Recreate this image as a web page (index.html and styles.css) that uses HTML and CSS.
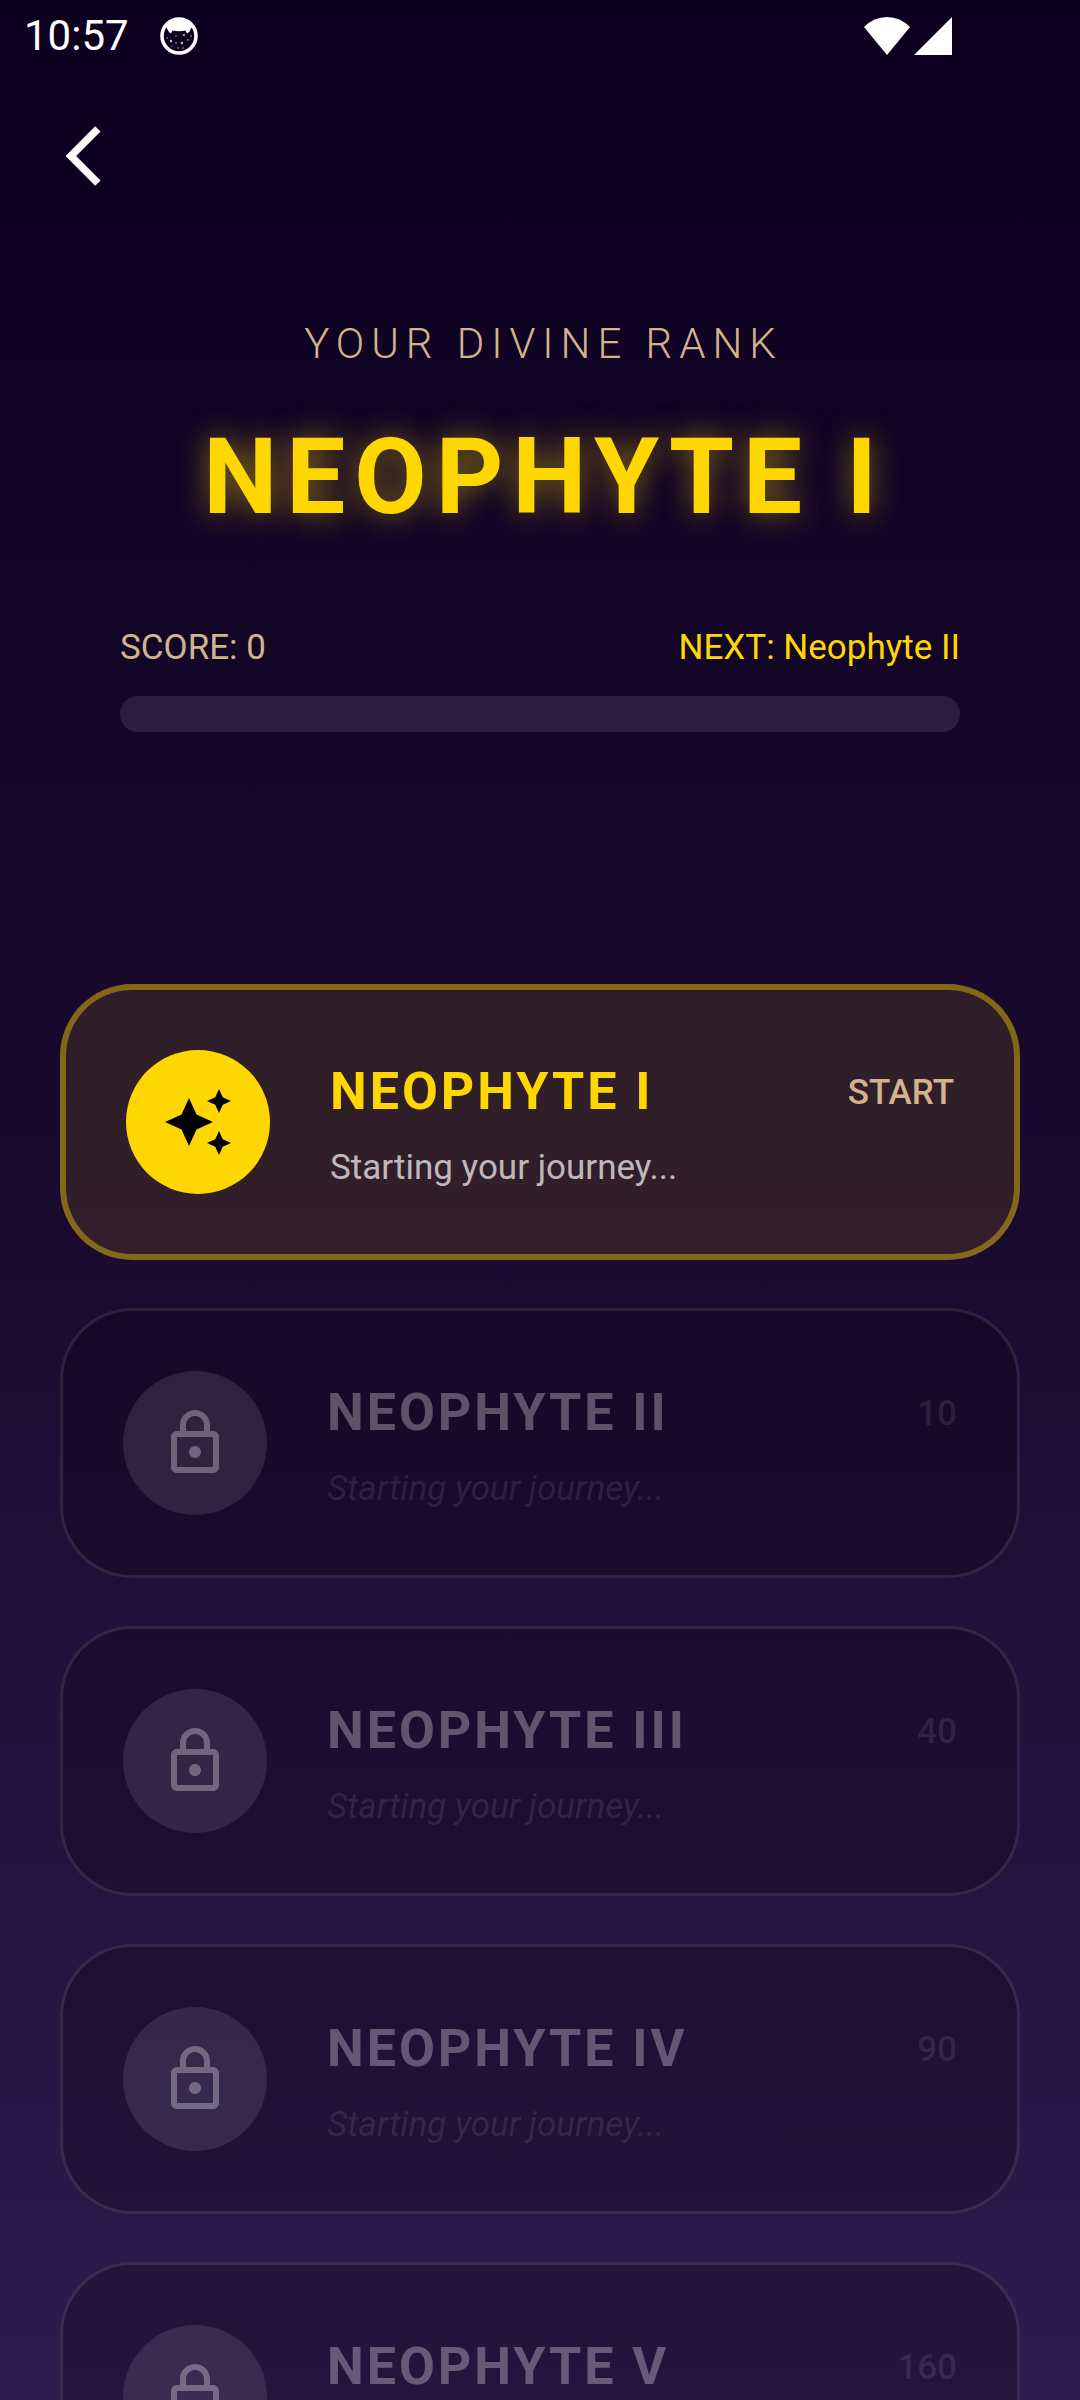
FILE: index.html
```html
<!DOCTYPE html>
<html lang="en">
<head>
    <meta charset="UTF-8">
    <meta name="viewport" content="width=device-width, initial-scale=1.0">
    <title>Divine Rank</title>
    <link rel="stylesheet" href="styles.css">
</head>
<body>
<!-- Shared icons -->
<svg class="icon-defs" aria-hidden="true">
    <symbol id="icon-lock" viewBox="0 0 24 24">
        <path d="M18 8h-1V6c0-2.76-2.24-5-5-5S7 3.24 7 6v2H6c-1.1 0-2 .9-2 2v10c0 1.1.9 2 2 2h12c1.1 0 2-.9 2-2V10c0-1.1-.9-2-2-2zM9 6c0-1.66 1.34-3 3-3s3 1.34 3 3v2H9V6zm9 14H6V10h12v10zm-6-3c1.1 0 2-.9 2-2s-.9-2-2-2-2 .9-2 2 .9 2 2 2z"/>
    </symbol>
</svg>

<div class="screen">
    <div class="status-bar">
        <span class="time">10:57</span>
        <svg class="status-app" viewBox="0 0 38 38">
            <circle cx="19" cy="19" r="17" fill="none" stroke="#fff" stroke-width="3.6"/>
            <path d="M6 10Q19-4 32 10L29 15 27 16.5 25.5 13.5Q19 15 12.500 13.500L11 16.500 9 15Z" fill="#fff"/>
            <g fill="#c9c4d6">
                <circle cx="11" cy="24" r="1.2"/>
                <circle cx="16" cy="19" r=".7"/>
                <circle cx="22" cy="26" r="1.2"/>
                <circle cx="24" cy="18" r="1.1"/>
                <circle cx="28" cy="23" r=".8"/>
                <circle cx="16" cy="26" r=".8"/>
                <circle cx="12" cy="29" r=".6"/>
                <circle cx="18" cy="31" r=".8"/>
                <circle cx="23" cy="31" r=".7"/>
                <circle cx="31" cy="19" r=".7"/>
                <circle cx="7" cy="21" r=".7"/>
            </g>
        </svg>
        <div class="status-right">
            <svg class="status-wifi" viewBox="0 0 46 38"><path d="M0 10Q10 0 23 0T46 10L23 38Z"/></svg>
            <svg class="status-signal" viewBox="0 0 38 38"><path d="M38 0V38H0Z"/></svg>
        </div>
    </div>

    <nav class="app-bar">
        <button type="button" class="back" aria-label="Back">
            <svg class="icon" viewBox="0 0 24 24"><path d="M17.51 3.87L15.73 2.1 5.84 12l9.9 9.9 1.77-1.77L9.38 12z"/></svg>
        </button>
    </nav>

    <header class="rank-header">
        <p class="rank-label">YOUR DIVINE RANK</p>
        <h1 class="rank-name">NEOPHYTE I</h1>
        <div class="progress-labels">
            <span class="score">SCORE: 0</span>
            <span class="next">NEXT: Neophyte II</span>
        </div>
        <div class="progress-track" role="progressbar" aria-label="Score" aria-valuemin="0" aria-valuemax="10" aria-valuenow="0"></div>
    </header>

    <main class="rank-list">
        <article class="card active">
            <div class="badge">
                <svg class="icon" viewBox="0 0 24 24"><path d="M19 9l1.25-2.75L23 5l-2.75-1.25L19 1l-1.25 2.75L15 5l2.75 1.25L19 9zm-7.5.5L9 4 6.5 9.5 1 12l5.5 2.5L9 20l2.5-5.5L17 12l-5.5-2.5zM19 15l-1.25 2.75L15 19l2.75 1.25L19 23l1.25-2.75L23 19l-2.75-1.25L19 15z"/></svg>
            </div>
            <div class="info">
                <div class="info-top">
                    <h2 class="card-title">NEOPHYTE I</h2>
                    <span class="points">START</span>
                </div>
                <p class="description">Starting your journey...</p>
            </div>
        </article>

        <article class="card">
            <div class="badge"><svg class="icon"><use href="#icon-lock"/></svg></div>
            <div class="info">
                <div class="info-top">
                    <h2 class="card-title">NEOPHYTE II</h2>
                    <span class="points">10</span>
                </div>
                <p class="description">Starting your journey...</p>
            </div>
        </article>

        <article class="card">
            <div class="badge"><svg class="icon"><use href="#icon-lock"/></svg></div>
            <div class="info">
                <div class="info-top">
                    <h2 class="card-title">NEOPHYTE III</h2>
                    <span class="points">40</span>
                </div>
                <p class="description">Starting your journey...</p>
            </div>
        </article>

        <article class="card">
            <div class="badge"><svg class="icon"><use href="#icon-lock"/></svg></div>
            <div class="info">
                <div class="info-top">
                    <h2 class="card-title">NEOPHYTE IV</h2>
                    <span class="points">90</span>
                </div>
                <p class="description">Starting your journey...</p>
            </div>
        </article>

        <article class="card">
            <div class="badge"><svg class="icon"><use href="#icon-lock"/></svg></div>
            <div class="info">
                <div class="info-top">
                    <h2 class="card-title">NEOPHYTE V</h2>
                    <span class="points">160</span>
                </div>
                <p class="description">Starting your journey...</p>
            </div>
        </article>
    </main>
</div>
</body>
</html>
```
FILE: styles.css
```css
* {
    box-sizing: border-box;
}
body {
    margin: 0;
    font-family: Roboto, "Open Sans", sans-serif;
    color: #fff;
    background: #0d001f;
}
h1, h2, p {
    margin: 0;
}
.icon-defs {
    display: none;
}
.icon {
    display: block;
    width: 72px;
    height: 72px;
    fill: currentColor;
}
.screen {
    display: flex;
    flex-direction: column;
    height: 100vh;
    background: linear-gradient(#0c001e, #1a0a2e 50%, #2d1b4e);
}

/* Status bar */
.status-bar {
    display: flex;
    align-items: center;
    height: 72px;
    padding: 0 128px 0 24px;
}
.time {
    font-size: 42px;
    line-height: 72px;
}
.status-app {
    width: 38px;
    height: 38px;
    margin-left: 31px;
}
.status-right {
    display: flex;
    gap: 4px;
    margin-left: auto;
    fill: #fff;
}
.status-wifi {
    width: 46px;
    height: 38px;
}
.status-signal {
    width: 38px;
    height: 38px;
}

/* App bar */
.app-bar {
    padding: 48px;
}
.back {
    display: block;
    padding: 0;
    border: none;
    background: none;
    color: #fff;
    cursor: pointer;
}

/* Current rank */
.rank-header {
    padding: 72px 120px 252px;
}
.rank-label {
    padding-left: 7px;
    font-size: 42px;
    font-weight: 300;
    line-height: 64px;
    letter-spacing: 7px;
    text-align: center;
    color: #d2b48c;
}
.rank-name {
    margin: 20px 0 60px;
    padding-left: 9px;
    font-size: 105px;
    font-weight: bold;
    line-height: 164px;
    letter-spacing: 9px;
    text-align: center;
    color: #ffd700;
    text-shadow: 0 0 30px rgba(255, 215, 0, 0.5);
}
.progress-labels {
    display: flex;
    justify-content: space-between;
    font-size: 35px;
    line-height: 56px;
}
.score {
    color: #d2b48c;
}
.next {
    color: #ffd700;
}
.progress-track {
    height: 36px;
    margin-top: 20px;
    border-radius: 18px;
    background: rgba(255, 255, 255, 0.1);
}

/* Rank list */
.rank-list {
    flex: 1;
    display: flex;
    flex-direction: column;
    gap: 48px;
    min-height: 0;
    padding: 0 60px;
    overflow-y: auto;
    scrollbar-width: none;
}
.card {
    display: flex;
    flex-shrink: 0;
    align-items: center;
    gap: 60px;
    padding: 60px;
    border: 3px solid rgba(255, 255, 255, 0.1);
    border-radius: 72px;
    background: rgba(0, 0, 0, 0.2);
    color: rgba(255, 255, 255, 0.3);
}
.badge {
    display: flex;
    align-items: center;
    justify-content: center;
    width: 144px;
    height: 144px;
    border-radius: 50%;
    background: rgba(255, 255, 255, 0.1);
}
.info {
    flex: 1;
}
.info-top {
    display: flex;
    align-items: center;
    justify-content: space-between;
    margin-bottom: 8px;
}
.card-title {
    font-size: 52px;
    font-weight: bold;
    line-height: 84px;
    letter-spacing: 3px;
}
.points {
    font-size: 35px;
    font-weight: 500;
    color: rgba(255, 255, 255, 0.1);
}
.description {
    font-size: 35px;
    line-height: 52px;
    color: rgba(255, 255, 255, 0.1);
    font-style: italic;
}
.card.active {
    border: 6px solid rgba(255, 215, 0, 0.4);
    background: rgba(255, 215, 0, 0.1);
}
.active .badge {
    background: #ffd700;
    color: #000;
}
.active .card-title {
    color: #ffd700;
}
.active .points {
    color: #d2b48c;
}
.active .description {
    font-style: normal;
    color: rgba(255, 255, 255, 0.7);
}
```
